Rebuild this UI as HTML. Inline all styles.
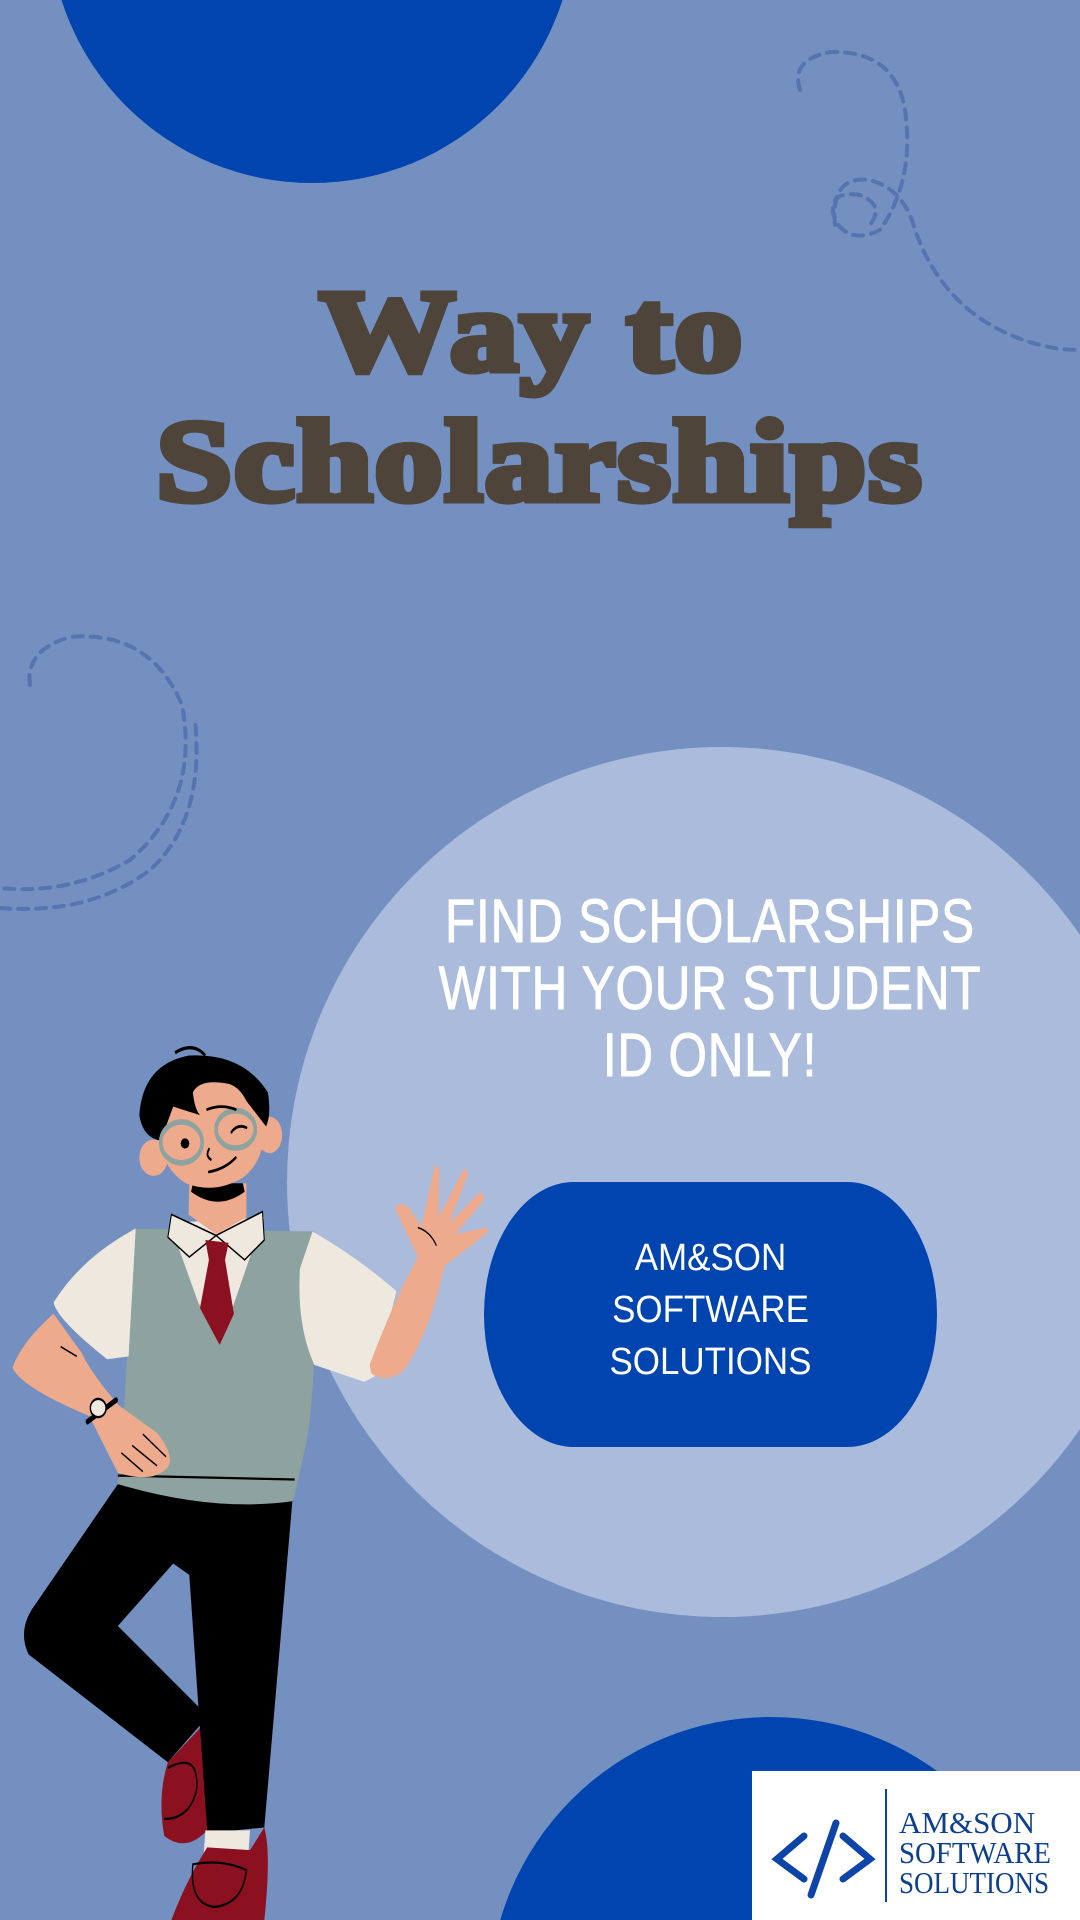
<!DOCTYPE html>
<html><head><meta charset="utf-8"><style>
html,body{margin:0;padding:0;width:1080px;height:1920px;overflow:hidden}
#w{width:1080px;height:1920px;position:relative;overflow:hidden;background:#7490c0;font-family:"Liberation Sans",sans-serif}
.abs{position:absolute}
.circ{position:absolute;border-radius:50%}
.title{position:absolute;left:0;width:1080px;text-align:center;font-family:"Liberation Serif",serif;font-weight:bold;color:#4e443a;-webkit-text-stroke:7px #4e443a;font-size:116px;line-height:1;letter-spacing:2px;transform:scaleX(1.17);transform-origin:540px 0}
.find{position:absolute;left:210px;width:1000px;text-align:center;color:#fff;font-size:61px;line-height:67px;transform:scaleX(0.81);transform-origin:500px 0;top:888px;letter-spacing:1px;-webkit-text-stroke:1px #fff}
.am{position:absolute;left:484px;width:453px;text-align:center;color:#fff;font-size:38px;line-height:52px;top:1232px;transform:scaleX(0.92)}
</style></head><body><div id="w">
<div class="circ" style="left:49px;top:-343px;width:526px;height:526px;background:#0044b0"></div>
<div class="circ" style="left:287px;top:747px;width:870px;height:870px;background:#aabbdc"></div>
<div class="circ" style="left:489px;top:1717px;width:564px;height:564px;background:#0044b0"></div>

<svg class="abs" style="left:0;top:0" width="1080" height="1920" viewBox="0 0 1080 1920">
<g fill="none" stroke="#5674b0" stroke-width="4" stroke-dasharray="10 8" stroke-linecap="round">
<path d="M800,90 Q790,60 830,52 Q895,50 905,110 Q915,180 880,230 Q850,245 835,220 Q825,190 860,195 Q885,205 870,225"/>
<path d="M835,225 Q830,175 870,180 Q905,190 915,230 Q940,300 1000,330 Q1040,350 1080,350"/>
<path d="M30,685 Q25,650 70,637 Q150,630 182,705 Q200,800 130,860 Q70,895 0,888"/>
<path d="M0,908 Q90,915 150,870 Q205,820 195,720"/>
</g>
</svg>

<div class="title" style="top:274px;left:-8px">Way to</div>
<div class="title" style="top:404px">Scholarships</div>

<div class="find">FIND SCHOLARSHIPS<br>WITH YOUR STUDENT<br>ID ONLY!</div>

<div class="abs" style="left:484px;top:1182px;width:453px;height:265px;background:#0044b0;border-radius:90px/132px"></div>
<div class="am">AM&amp;SON<br>SOFTWARE<br>SOLUTIONS</div>

<svg class="abs" style="left:0;top:1030px" width="560" height="890" viewBox="0 0 1568 1568" preserveAspectRatio="none">
<path d="M330,800 L820,820 L740,1405 L580,1415 L530,960 L485,940 L330,1050 L560,1195 L560,1225 L470,1290 L80,1100 Q50,1060 90,1020 Z" fill="#000"/>
<path d="M470,1290 L560,1230 L580,1410 Q520,1450 460,1420 Q440,1350 470,1290Z" fill="#8b1020"/>
<path d="M575,1410 L700,1410 L695,1455 L570,1455Z" fill="#efe8de"/>
<path d="M580,1440 L700,1445 L740,1405 Q760,1450 740,1568 L480,1568 Q520,1500 580,1440Z" fill="#8b1020"/>
<path d="M540,1470 Q620,1460 690,1480 Q680,1540 600,1545 Q530,1540 540,1470Z" fill="none" stroke="#000" stroke-width="4"/>
<path d="M470,1300 Q560,1270 550,1340 Q530,1390 460,1390" fill="none" stroke="#000" stroke-width="4"/>
<path d="M370,350 L880,355 Q890,600 860,720 Q840,780 820,830 Q600,850 330,800 Q360,600 370,350Z" fill="#8ea3a0"/>
<path d="M330,785 L825,792" stroke="#000" stroke-width="4"/>
<path d="M380,350 Q230,400 150,480 Q160,510 300,580 L360,575Z" fill="#efe8de"/>
<path d="M875,355 Q1000,400 1110,460 L1050,610 L1020,620 L880,590 Q830,520 840,420Z" fill="#efe8de"/>
<path d="M475,340 L555,480 L615,555 L700,400 L740,330Z" fill="#efe8de"/>
<path d="M530,270 L690,270 L690,330 L605,360 L528,325Z" fill="#eeaa8c"/>
<path d="M535,285 Q610,320 685,285 L680,270 L540,270Z" fill="#000"/>
<path d="M480,325 L605,362 L530,400 L470,365Z M735,320 L605,362 L685,405 L740,370Z" fill="#efe8de" stroke="#000" stroke-width="3"/>
<path d="M575,370 L640,375 L630,405 L655,500 L615,555 L560,490 L585,405Z" fill="#8b1020"/>
<path d="M150,500 Q60,550 35,595 Q60,630 250,680 L330,780 Q430,800 470,770 Q490,750 440,710 L330,660 Q250,600 230,570Z" fill="#eeaa8c"/>
<path d="M170,558 L215,575 M400,712 L465,752 M370,732 L440,768 M340,745 L400,778" stroke="#000" stroke-width="3"/>
<path d="M245,690 L325,652" stroke="#000" stroke-width="10" stroke-linecap="round"/>
<ellipse cx="275" cy="666" rx="22" ry="16" fill="#efe8de" stroke="#000" stroke-width="4"/>
<path d="M1035,590 Q1100,480 1170,400 L1110,320 Q1100,300 1140,310 L1180,345 L1215,245 Q1225,232 1230,245 L1228,330 L1295,248 Q1310,240 1310,255 L1258,340 L1345,285 Q1360,290 1352,302 L1275,360 L1360,348 Q1372,352 1362,358 Q1300,390 1245,415 Q1200,540 1130,600 Q1080,625 1040,605Z" fill="#eeaa8c"/>
<path d="M1170,348 Q1205,355 1222,380" fill="none" stroke="#000" stroke-width="3"/>
<ellipse cx="430" cy="225" rx="40" ry="32" fill="#eeaa8c"/>
<ellipse cx="755" cy="185" rx="35" ry="32" fill="#eeaa8c"/>
<path d="M440,170 Q450,100 560,85 Q700,80 740,160 Q745,230 680,260 Q600,290 520,270 Q445,240 440,170Z" fill="#eeaa8c"/>
<path d="M390,150 Q400,60 530,45 Q680,40 750,110 Q760,150 745,170 L690,125 Q670,100 640,95 Q560,85 540,110 Q545,140 560,150 L485,135 L450,195 Q400,190 390,150Z" fill="#000"/>
<path d="M490,40 Q540,20 575,45" fill="none" stroke="#000" stroke-width="6"/>
<ellipse cx="508" cy="198" rx="58" ry="36" fill="none" stroke="#8ea3a0" stroke-width="10"/>
<ellipse cx="660" cy="175" rx="55" ry="33" fill="none" stroke="#8ea3a0" stroke-width="10"/>
<ellipse cx="518" cy="200" rx="12" ry="9" fill="#000"/>
<path d="M648,180 Q665,165 690,172 M585,250 Q630,245 660,225 M585,210 Q575,222 590,228 M580,140 Q620,130 660,140" fill="none" stroke="#000" stroke-width="5" stroke-linecap="round"/>
</svg>

<div class="abs" style="left:752px;top:1771px;width:328px;height:149px;background:#fff"></div>
<svg class="abs" style="left:752px;top:1771px" width="328" height="149" viewBox="0 0 328 149">
<g stroke="#0d44a8" stroke-width="7" stroke-linecap="round" fill="none">
<path d="M52,65 L25,88 L52,108"/>
<path d="M84,52 L59,124"/>
<path d="M91,65 L118,88 L91,108"/>
</g>
<line x1="134" y1="18" x2="134" y2="131" stroke="#0d44a8" stroke-width="2"/>
<g fill="#0d3f8f" font-family="Liberation Serif,serif" font-size="31">
<text x="147" y="62">AM&amp;SON</text>
<text x="147" y="92" textLength="152" lengthAdjust="spacingAndGlyphs">SOFTWARE</text>
<text x="147" y="122" textLength="150" lengthAdjust="spacingAndGlyphs">SOLUTIONS</text>
</g>
</svg>
</div></body></html>
